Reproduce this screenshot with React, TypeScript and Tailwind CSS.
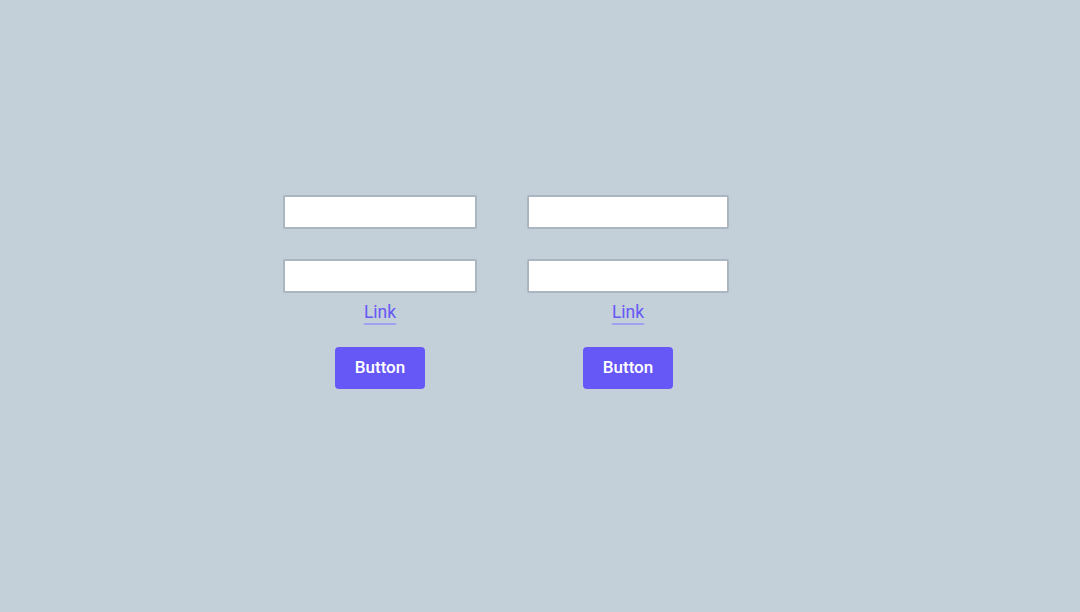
export default function App() {
  const columns = [
    { width: "w-[194px]" },
    { width: "w-[202px]" },
  ];

  return (
    <div className="min-h-[612px] w-full bg-[#c3cfd9] pt-[195px] pl-[283px] font-['Roboto',sans-serif]">
      <div className="flex gap-[50px]">
        {columns.map((col, i) => (
          <div key={i} className={`flex flex-col items-center ${col.width}`}>
            <input
              type="text"
              className="h-[34px] w-full rounded-[2px] border-2 border-[#abb6c0] bg-white outline-none"
            />
            <input
              type="text"
              className="mt-[30px] h-[34px] w-full rounded-[2px] border-2 border-[#abb6c0] bg-white outline-none"
            />
            <a
              href="#"
              className="mt-[8px] text-[17.5px] leading-[22px] text-[#6658f6] underline decoration-[#a4a0f0] decoration-2 underline-offset-[5px]"
            >
              Link
            </a>
            <button className="mt-[24px] h-[42px] w-[90px] rounded-[4px] bg-[#6658f6] text-[17px] font-medium text-white">
              Button
            </button>
          </div>
        ))}
      </div>
    </div>
  );
}
